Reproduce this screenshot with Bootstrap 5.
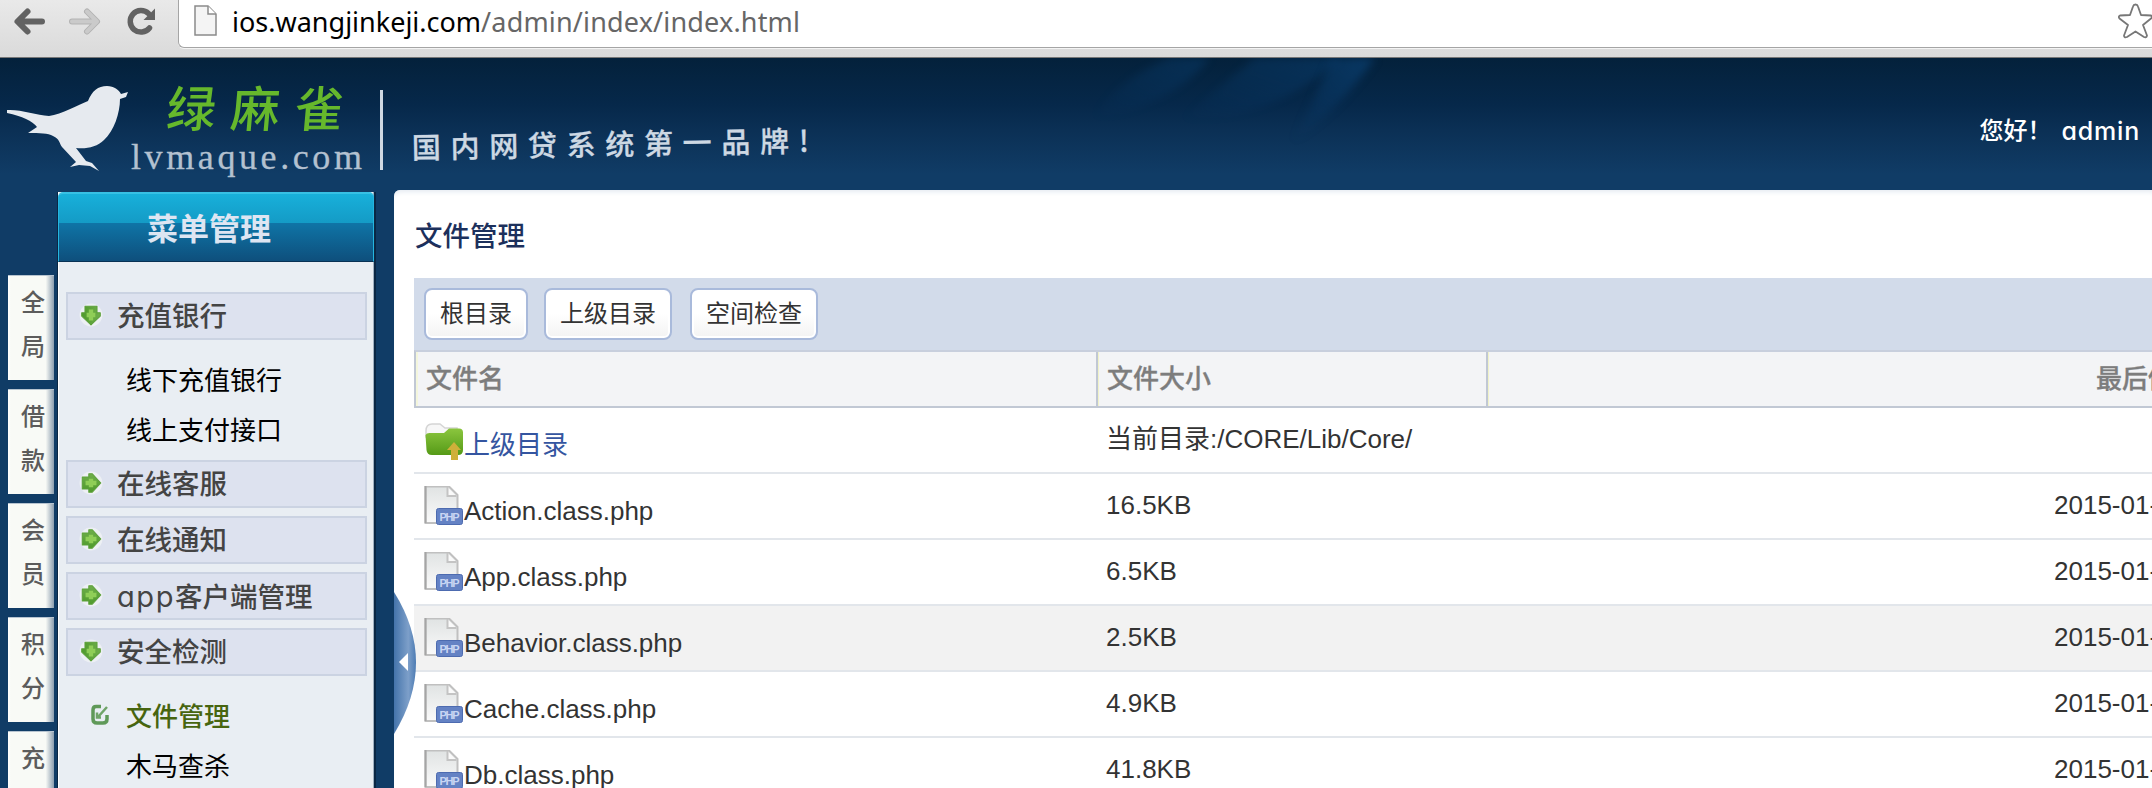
<!DOCTYPE html>
<html lang="zh-CN">
<head>
<meta charset="utf-8">
<title>文件管理</title>
<link href="https://cdn.jsdelivr.net/npm/bootstrap@5.3.0/dist/css/bootstrap.min.css" rel="stylesheet">
<style>
body{height:788px;overflow:hidden;background:#103c66;font-family:"Liberation Sans","Noto Sans CJK SC",sans-serif;font-size:26px;line-height:1;color:#333;white-space:nowrap}
.chrome{height:58px;background:linear-gradient(#e9e9e9,#dadada);border-bottom:1px solid #777}
.navicons{width:178px}
.omni{height:48px;background:#fff;border:1px solid #a5a5a5;border-width:0 0 1px 1px;border-radius:0 0 0 6px;padding-left:15px;box-shadow:0 1px 0 #f4f4f4}
.url{font-family:"Noto Sans",sans-serif;font-size:27px;color:#666;margin-left:15px;margin-top:-4px;letter-spacing:.17px}
.url b{font-weight:400;color:#000;letter-spacing:0}
.top{height:132px;background:linear-gradient(#04213b,#06284a 35%,#0b3055 55%,#103c66 88%)}
.streaks{left:1080px;top:0}
.streaks path{filter:blur(4px)}
.brand{width:252px;padding-top:21px}
.brand-cn{font:500 49px/54px "Noto Sans CJK SC",sans-serif;color:#66b82c;letter-spacing:15px;padding-left:36px;transform:skewX(-5deg)}
.brand-en{font:36px/38px "Liberation Serif",serif;color:#b3c1d0;letter-spacing:3.6px;margin-top:5px;-webkit-text-stroke:.3px}
.rule{width:3px;height:80px;background:#cfd8e2;margin-top:32px}
.slogan{font:500 29px/34px "Noto Sans CJK SC",sans-serif;color:#cdd8e3;letter-spacing:9.7px;margin:67px 0 0 29px;transform:rotate(-1deg);-webkit-text-stroke:.3px}
.hello{color:#fff;font-size:24px;font-weight:500;margin:60px 12px 0 0;height:26px}
.geo{font-family:Inter,sans-serif;font-feature-settings:"cv11"}
.main{height:598px}
.tabs{width:54px;padding:85px 0 0 8px;gap:9px}
.vtab{height:105px;flex:none;background:linear-gradient(90deg,#fff 0,#f8faf6 6%,#f8faf6 82%,#8b9dae);border-top:1px solid #b7c4d0;font-size:24px;line-height:44px;font-weight:500;color:#5c5c5c;padding:5px 0 0 13px;white-space:normal}
.vtab:last-child{height:57px}
.side{width:319px;margin:2px 0 0 3px;height:596px;background:#e9eef3;border:solid #0a2744;border-width:0 2px 0 1px;box-shadow:inset -1px 0 #9fb0c0,inset 1px 0 #fff}
.side-head{height:70px;background:linear-gradient(#18b0da,#149bc6 43%,#0f74a6 44%,#0e4f7c);border:1px solid #25b5e0;border-top:2px solid #37c0e4;border-bottom:1px solid #083154;border-radius:5px 5px 0 0;color:#dde5f2;font:700 31px/65px "Noto Sans CJK SC",sans-serif;padding-right:14px}
.side-list{padding:30px 7px 0 8px}
.group{height:48px;background:#dde2ef;border:2px solid #cbd3e2;margin-bottom:8px;font-size:27.5px;font-weight:500;color:#444;padding-left:11px}
.group svg{margin:-3px 14px 0 0}
.group span{padding-top:2px}
.subs{padding:8px 0 4px 60px}
.subs>div{height:50px;color:#000;line-height:50px}
.subs .on{color:#47650f;font-weight:500;margin-left:-36px}
.content-pane{margin-left:18px;background:#fff;border-radius:6px 0 0 0;padding:0 0 0 20px;box-shadow:inset 0 5px 5px -3px #e5ebf2}
.title-cn{font-size:27.5px;font-weight:500;color:#1c305c;height:88px;padding:5px 0 0 1px}
.bar{height:72px;background:#d2dbea;padding:0 10px}
.bar .tool{height:52px;border:2px solid #a9badb;border-radius:8px;background:linear-gradient(#fff 50%,#f3f3f3);box-shadow:inset 0 0 0 2px #fff;font-size:24px;line-height:24px;color:#333;padding:0 14px}
.fhead{height:58px;background:#f3f4f6;border:solid #c1c8d4;border-width:2px 0 2px 2px;border-top-color:#c8cfdd;color:#7d7d7d;font-weight:500;-webkit-text-stroke:.3px}
.frow{height:66px;border-bottom:2px solid #e2e6eb}
.frow:last-of-type{height:52px;border:0;padding-bottom:0}
.frow.hov{background:#f2f2f2}
.c1{width:682px;padding-left:10px}
.c2{width:390px;padding-left:10px;padding-bottom:2px}
.fhead .c1{width:680px;padding-left:8px;border-left:2px solid #f4f6dc}
.fhead .c2,.fhead .c3{border-left:2px solid #c1c8d4;box-shadow:inset 1px 0 #f1f3c8}
.fhead .c2{padding:0 0 0 9px}
.fhead .c3{padding:0 0 0 608px}
.c3{padding:0 0 2px 568px}
.up{color:#3455a0;padding-top:9px}
.fname{padding-top:12px}
.pull{left:0;top:402px}
</style>
</head>
<body class="d-flex flex-column">
<svg width="0" height="0" class="position-absolute">
<defs>
<linearGradient id="gr" x1="0" y1="0" x2="0" y2="1"><stop offset="0" stop-color="#6fae4b"/><stop offset="1" stop-color="#4f9a2c"/></linearGradient>
<linearGradient id="fo" x1="0" y1="0" x2="0" y2="1"><stop offset="0" stop-color="#8bc63e"/><stop offset="1" stop-color="#559a17"/></linearGradient>
<linearGradient id="pg" x1="0" y1="0" x2="0" y2="1"><stop offset="0" stop-color="#e0e3e3"/><stop offset="1" stop-color="#fafafa"/></linearGradient>
<linearGradient id="pu"><stop offset="0" stop-color="#4474ab"/><stop offset=".65" stop-color="#7d9fc9"/><stop offset="1" stop-color="#4d7cb4"/></linearGradient>
<linearGradient id="st" x1="1" y1="0" x2="0" y2="1"><stop offset="0" stop-color="#0b4378" stop-opacity=".7"/><stop offset="1" stop-color="#0b4378" stop-opacity="0"/></linearGradient>
</defs>
<symbol id="arr" viewBox="0 0 22 22"><circle cx="11" cy="11" r="10.500" fill="#f1f4f6" opacity=".75"/><path d="M3 5.500h6V2.500h3L20 11l-8 8.500H9v-3H3z" fill="url(#gr)" stroke="#5da13a" stroke-linejoin="round"/><path d="M6 11h10M11 7v8" stroke="#8fce57" stroke-width="4"/></symbol>
<symbol id="php" viewBox="0 0 40 40"><path d="M1.500 .5H25L33.500 9V37H1.500z" fill="url(#pg)" stroke="#c0c0c0" stroke-width="2"/><path d="M1.500 0v37" stroke="#a5a5a5" stroke-width="2"/><path d="M23.500 1v9h9" fill="#fafafa" stroke="#c4c4c4" stroke-width="2"/><rect x="12.500" y="22.500" width="26" height="16" rx="2" fill="#6482c4" stroke="#4d6bb0"/><text x="25.500" y="35" font-family="Liberation Sans" font-size="11" font-weight="700" text-anchor="middle" textLength="20" fill="#c9d6f3">PHP</text></symbol>
</svg>

<header class="chrome d-flex flex-shrink-0">
  <div class="navicons flex-shrink-0">
    <svg width="178" height="57" fill="none" stroke-linecap="round" stroke-linejoin="round">
      <path d="M42 21.500H18M27.500 11.500l-10 10 10 10" stroke="#626262" stroke-width="6"/>
      <path d="M72 21.500H96M87 11.500l10 10-10 10" stroke="#b3b3b3" stroke-width="6"/>
      <path d="M72 21.500H96M87 11.500l10 10-10 10" stroke="#cacaca" stroke-width="4"/>
      <path d="M149.500 28a10.800 10.800 0 1 1-1-14.500" stroke="#626262" stroke-width="5.500"/>
      <path d="M155 8.500V20H143.500z" fill="#626262"/>
    </svg>
  </div>
  <div class="omni flex-grow-1 d-flex align-items-center">
    <svg width="23" height="32" viewBox="0 0 23 32" style="margin-top:-5px"><path d="M1 1h13l8 8v21H1z" fill="#f4f4f4" stroke="#8a8a8a" stroke-width="1.500"/><path d="M14 1v8h8" fill="#fff" stroke="#8a8a8a" stroke-width="1.500"/></svg>
    <div class="url"><b>ios.wangjinkeji.com</b>/admin/index/index.html</div>
    <svg class="ms-auto flex-shrink-0" width="34" height="36" viewBox="0 0 34 36" style="margin-top:-6px"><path d="M17.500 1.500q2 0 2.500 2l3 8.500 10 .5q1.500 1.500 0 3l-8 6.500 4 10.500q-.5 2.500-3 1.500l-8.500-5.500-8.500 5.500q-3 1-3-1.500L10 22 1.500 15.500q-1.500-2 .5-3L12 12 15 3.500q.5-2 2.500-2z" fill="#fff" stroke="#777" stroke-width="1.800" stroke-linejoin="round"/></svg>
  </div>
</header>

<div class="top d-flex flex-shrink-0 position-relative">
  <svg class="streaks position-absolute" width="320" height="90"><path d="M90 0Q40 20 12 60Q90 50 130 0z" fill="url(#st)" opacity=".6"/><path d="M175 0L100 62Q200 60 260 0z" fill="url(#st)" opacity=".7"/><path d="M252 0Q230 50 212 85Q260 50 295 0z" fill="url(#st)"/></svg>
  <svg width="131" height="132" viewBox="0 58 131 132" class="flex-shrink-0"><path d="M7 110C20 109 36 115 49 116C62 114 78 105 88 101C92 91 98 86 107 86C114 86 119 90 121 94L128 92 126 97 120 99C120 113 114 131 104 140C97 147 87 149 76 148L86 161 92 163 99 171 90 166 79 165 70 167 76 162 62 147C59 143 60 139 53 136C48 133 40 133 28 133L37 127Q30 118 7 113z" fill="#e6eaef"/></svg>
  <div class="brand flex-shrink-0"><div class="brand-cn">绿麻雀</div><div class="brand-en">lvmaque.com</div></div>
  <div class="rule" style="margin-left:-3px"></div>
  <div class="slogan">国内网贷系统第一品牌!</div>
  <div class="hello ms-auto d-flex align-items-center">您好！<span class="geo" style="margin-left:10px;font-size:25px;letter-spacing:.8px">admin</span></div>
</div>

<div class="main d-flex flex-shrink-0">
  <nav class="tabs d-flex flex-column flex-shrink-0">
    <div class="vtab">全<br>局</div><div class="vtab">借<br>款</div><div class="vtab">会<br>员</div><div class="vtab">积<br>分</div><div class="vtab">充</div>
  </nav>
  <aside class="side flex-shrink-0">
    <div class="side-head text-center">菜单管理</div>
    <div class="side-list">
      <div class="group d-flex align-items-center"><svg width="24" height="24" viewBox="0 0 22 22"><g transform="rotate(90 11 11)"><use href="#arr" width="22" height="22"/></g></svg><span>充值银行</span></div>
      <div class="subs"><div>线下充值银行</div><div>线上支付接口</div></div>
      <div class="group d-flex align-items-center"><svg width="24" height="24"><use href="#arr"/></svg><span>在线客服</span></div>
      <div class="group d-flex align-items-center"><svg width="24" height="24"><use href="#arr"/></svg><span>在线通知</span></div>
      <div class="group d-flex align-items-center"><svg width="24" height="24"><use href="#arr"/></svg><span><i class="geo fst-normal fw-normal" style="font-size:29px;letter-spacing:1.6px">app</i>客户端管理</span></div>
      <div class="group d-flex align-items-center"><svg width="24" height="24" viewBox="0 0 22 22"><g transform="rotate(90 11 11)"><use href="#arr" width="22" height="22"/></g></svg><span>安全检测</span></div>
      <div class="subs">
        <div class="on d-flex align-items-center"><svg width="20" height="22" viewBox="0 0 20 22" style="margin:-5px 16px 0 0"><path d="M11 2.500H6Q3 2.500 3 6v9q0 4 4 4h6q4 0 4-4v-4" fill="none" stroke="#5f9958" stroke-width="3.500"/><path d="M7 8.500v5h4M8 13L17 3" fill="none" stroke="#6fa468" stroke-width="2.500"/></svg>文件管理</div>
        <div>木马查杀</div>
      </div>
    </div>
  </aside>
  <main class="content-pane flex-grow-1 position-relative overflow-hidden">
    <div class="title-cn d-flex align-items-center">文件管理</div>
    <div class="bar d-flex align-items-center">
      <button class="btn tool">根目录</button><button class="btn tool" style="margin-left:16px">上级目录</button><button class="btn tool" style="margin-left:18px">空间检查</button>
    </div>
    <div class="fhead d-flex align-items-stretch">
      <div class="c1 d-flex align-items-center flex-shrink-0">文件名</div><div class="c2 d-flex align-items-center flex-shrink-0">文件大小</div><div class="c3 d-flex align-items-center">最后修</div>
    </div>
    <div class="frow d-flex align-items-center">
      <div class="c1 d-flex align-items-center flex-shrink-0"><svg width="40" height="38" viewBox="0 0 40 38" style="margin-top:4px"><path d="M2 8Q2 1 8 1h8l5 4h12v9H2z" fill="#f7f7f7" stroke="#d5d5d5" stroke-width="1.500"/><path d="M1.500 12q1-2 4-2H20l5-4.500h10q4 0 4 4V27q0 5-5 5H8q-5 0-5.500-5z" fill="url(#fo)"/><path d="M30 19l7 8h-3v10h-7V27h-4z" fill="#cfb03a"/></svg><span class="up">上级目录</span></div><div class="c2">当前目录:/CORE/Lib/Core/</div>
    </div>
    <div class="frow d-flex align-items-center"><div class="c1 d-flex flex-shrink-0"><svg width="40" height="40"><use href="#php"/></svg><span class="fname">Action.class.php</span></div><div class="c2 flex-shrink-0">16.5KB</div><div class="c3">2015-01-</div></div>
    <div class="frow d-flex align-items-center"><div class="c1 d-flex flex-shrink-0"><svg width="40" height="40"><use href="#php"/></svg><span class="fname">App.class.php</span></div><div class="c2 flex-shrink-0">6.5KB</div><div class="c3">2015-01-</div></div>
    <div class="frow hov d-flex align-items-center"><div class="c1 d-flex flex-shrink-0"><svg width="40" height="40"><use href="#php"/></svg><span class="fname">Behavior.class.php</span></div><div class="c2 flex-shrink-0">2.5KB</div><div class="c3">2015-01-</div></div>
    <div class="frow d-flex align-items-center"><div class="c1 d-flex flex-shrink-0"><svg width="40" height="40"><use href="#php"/></svg><span class="fname">Cache.class.php</span></div><div class="c2 flex-shrink-0">4.9KB</div><div class="c3">2015-01-</div></div>
    <div class="frow d-flex align-items-start" style="padding-top:12px"><div class="c1 d-flex flex-shrink-0"><svg width="40" height="40"><use href="#php"/></svg><span class="fname">Db.class.php</span></div><div class="c2 flex-shrink-0" style="padding-top:6px">41.8KB</div><div class="c3" style="padding-top:6px">2015-01-</div></div>
    <svg class="pull position-absolute" width="22" height="142"><path d="M0 0Q44 70 0 142z" fill="url(#pu)"/><path d="M14 61v18L5 70z" fill="#fff"/></svg>
  </main>
</div>
<script src="https://cdn.jsdelivr.net/npm/bootstrap@5.3.0/dist/js/bootstrap.bundle.min.js"></script>
</body>
</html>
